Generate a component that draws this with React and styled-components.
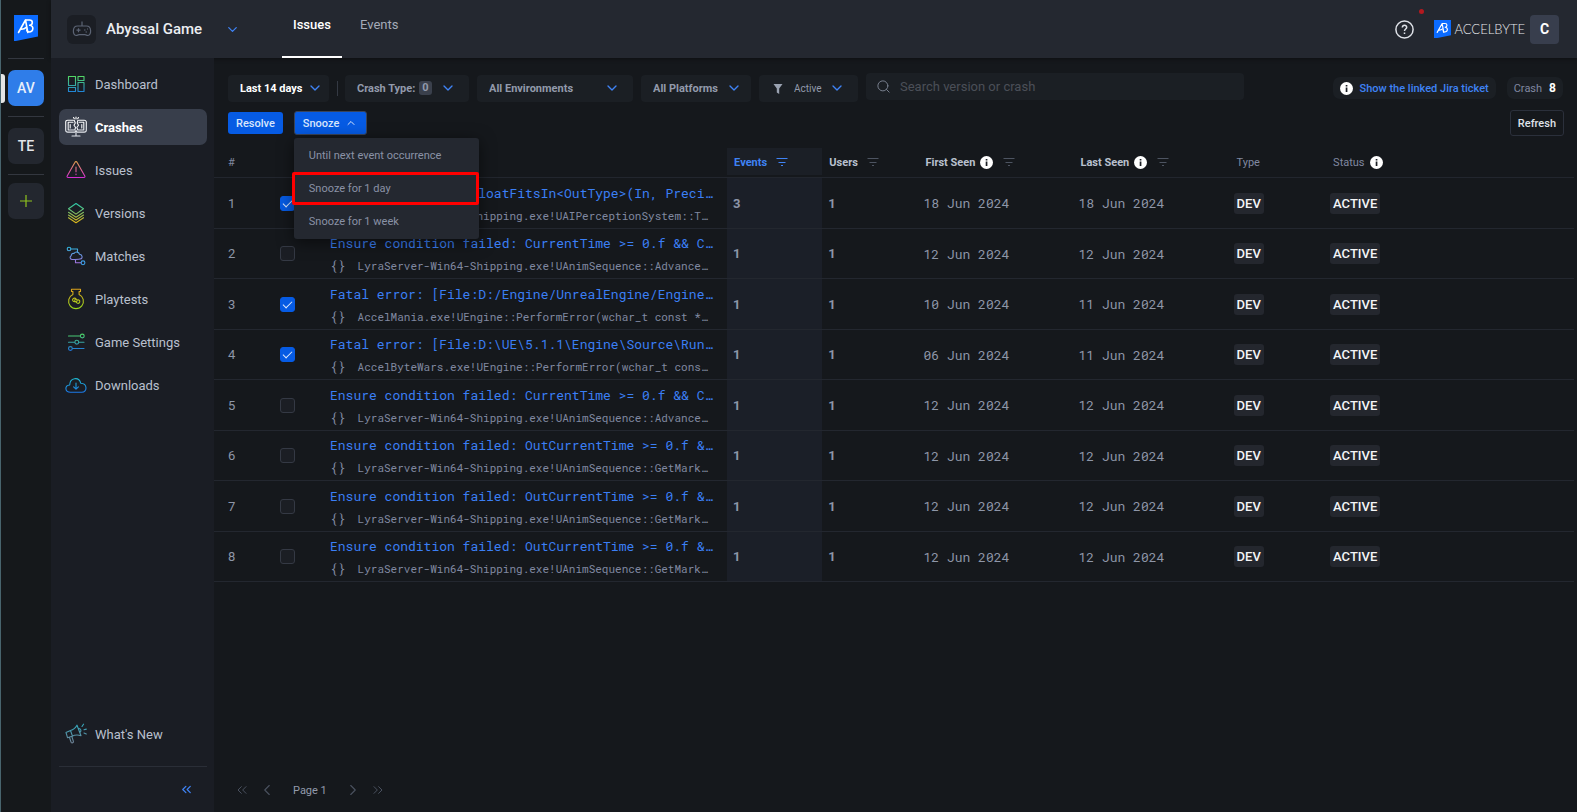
import React, { useState } from 'react'
import styled, { createGlobalStyle } from 'styled-components'
import { ChevronDown, ChevronUp, ChevronLeft, ChevronRight, ChevronsLeft, ChevronsRight, Search } from 'lucide-react'

const mono = `"Roboto Mono", "DejaVu Sans Mono", monospace`

const GlobalStyle = createGlobalStyle`
    * {
        box-sizing: border-box;
    }
    body {
        margin: 0;
        background: #15181c;
        color: #b4bccb;
        font-family: Roboto, "Liberation Sans", sans-serif;
        font-size: 12px;
    }
    button, input, select {
        font-family: inherit;
    }
    button {
        cursor: pointer;
    }
    svg {
        flex-shrink: 0;
    }
`

const Page = styled.div`
    display: flex;
    min-height: 100vh;
`

/* namespace rail */
const Rail = styled.nav`
    width: 51px;
    padding: 15px 7px 0;
    border-left: 1px solid #48646d;
    display: flex;
    flex-direction: column;
    align-items: stretch;
    background: #15181b;
`
const RailLogo = styled.a`
    display: flex;
    justify-content: center;
    height: 43px;
`
const RailItem = styled.div`
    border-top: 1px solid #33373f;
    padding: ${props => props.$last ? "8px" : "11px"} 0 ${props => props.$last ? "0" : "10px"};
    position: relative;
`
const RailButton = styled.button`
    display: flex;
    align-items: center;
    justify-content: center;
    width: 100%;
    height: 36px;
    padding: 0;
    border: none;
    border-radius: 7px;
    background: ${props => props.$active ? "#2f7de9" : "#23272f"};
    color: ${props => props.$active ? "#e8effa" : "#e3e5e9"};
    font-size: 14px;
    font-weight: 500;
`
const RailMarker = styled.span`
    position: absolute;
    left: -7px;
    top: 15px;
    width: 4px;
    height: 29px;
    border-radius: 0 3px 3px 0;
    background: #e4e4e4;
`

const Body = styled.div`
    flex: 1;
    min-width: 0;
    display: flex;
    flex-direction: column;
`

/* top bar */
const Header = styled.header`
    height: 58px;
    display: flex;
    align-items: center;
    padding: 0 18px 0 16px;
    background: #242830;
    box-shadow: 0 1px 4px rgba(0, 0, 0, 0.4);
`
const GameIcon = styled.span`
    display: flex;
    align-items: center;
    justify-content: center;
    width: 29px;
    height: 29px;
    border-radius: 6px;
    background: #1b1e24;
`
const GameButton = styled.button`
    display: flex;
    align-items: center;
    width: 215px;
    padding: 0;
    border: none;
    background: none;
    color: #eceef2;
    font-size: 15px;
    font-weight: 500;
    text-align: left;
`
const GameName = styled.span`
    width: 119px;
    margin-left: 10px;
`
const Tabs = styled.nav`
    display: flex;
    align-self: stretch;
`
const Tab = styled.a`
    padding: 16px 11px 0;
    line-height: 18px;
    border-bottom: 2px solid ${props => props.$active ? "#fff" : "transparent"};
    color: ${props => props.$active ? "#fff" : "#a4abb8"};
    font-size: 13px;
    font-weight: ${props => props.$active ? 500 : 400};
    text-decoration: none;
    & + & {
        margin-left: 7px;
    }
`
const HeaderRight = styled.div`
    margin-left: auto;
    display: flex;
    align-items: center;
`
const IconButton = styled.button`
    display: flex;
    align-items: center;
    padding: 0;
    border: none;
    background: none;
    color: ${props => props.$color || "#4a515f"};
`
const HelpWrap = styled.div`
    position: relative;
    margin-right: 20px;
`
const Dot = styled.span`
    position: absolute;
    top: -11px;
    right: -10px;
    width: 5px;
    height: 5px;
    border-radius: 50%;
    background: #b3191f;
`
const Brand = styled.a`
    display: flex;
    align-items: center;
    gap: 3px;
    color: #e6e8ec;
    font-family: Lato, sans-serif;
    font-size: 13px;
    font-weight: 300;
    text-decoration: none;
`
const Avatar = styled.button`
    width: 29px;
    height: 29px;
    margin-left: 5px;
    padding: 0;
    border: none;
    border-radius: 4px;
    background: #383e4d;
    color: #fff;
    font-size: 14px;
    font-weight: 700;
`

const Columns = styled.div`
    flex: 1;
    display: flex;
`

/* sidebar */
const Sidebar = styled.aside`
    width: 163px;
    padding: 0 7px 0 8px;
    background: #1a1d24;
    display: flex;
    flex-direction: column;
`
const Menu = styled.nav`
    display: flex;
    flex-direction: column;
    gap: 7px;
    padding-top: 8px;
`
const MenuItem = styled.a`
    display: flex;
    align-items: center;
    gap: 8px;
    height: 36px;
    padding-left: 6px;
    border-radius: 7px;
    background: ${props => props.$active ? "#383e4b" : "transparent"};
    color: ${props => props.$active ? "#fff" : "#b9c0ce"};
    font-size: 13px;
    font-weight: ${props => props.$active ? 700 : 400};
    text-decoration: none;
`
const SidebarFooter = styled.div`
    margin-top: auto;
`
const Collapse = styled.div`
    height: 46px;
    margin-top: 14px;
    padding-right: 13px;
    border-top: 1px solid #2a2e37;
    display: flex;
    align-items: center;
    justify-content: flex-end;
`

/* content */
const Main = styled.main`
    flex: 1;
    min-width: 0;
    display: flex;
    flex-direction: column;
    padding: 16px 3px 10px 0;
`
const FilterBar = styled.div`
    display: flex;
    align-items: center;
    gap: 8px;
    height: 28px;
    padding: 0 11px 0 14px;
`
const Filter = styled.label`
    display: grid;
    align-items: center;
    width: ${props => props.$width};
    height: 27px;
    padding: 0 6px 0 12px;
    border-radius: 4px;
    background: #1b1f24;
    color: #3f83f5;
    > * {
        grid-area: 1 / 1;
    }
    > svg {
        justify-self: end;
        pointer-events: none;
        margin-right: ${props => props.$inset || "0"};
    }
    > svg:first-child {
        justify-self: start;
        color: #9aa2b1;
    }
`
const FilterSelect = styled.select`
    appearance: none;
    border: none;
    background: none;
    height: 27px;
    padding: 0 0 0 ${props => props.$indent || "0"};
    color: ${props => props.$strong ? "#fff" : "#929aab"};
    font-size: ${props => props.$small ? "10px" : "11px"};
    font-weight: ${props => props.$small ? 400 : 700};
    outline: none;
`
const Divider = styled.span`
    width: 1px;
    height: 15px;
    margin-right: -1px;
    background: #343943;
`
const CrashType = styled.button`
    display: flex;
    align-items: center;
    width: 124px;
    height: 27px;
    padding: 0 13px 0 12px;
    border: none;
    border-radius: 4px;
    background: #1b1f24;
    color: #929aab;
    font-size: 11px;
    font-weight: 700;
    svg {
        margin-left: auto;
        color: #3f83f5;
    }
`
const Count = styled.span`
    margin-left: 4px;
    padding: 0 3px;
    line-height: 14px;
    border-radius: 3px;
    background: #3a404c;
`
const SearchBox = styled.label`
    display: flex;
    align-items: center;
    gap: 9px;
    width: 378px;
    height: 27px;
    margin-bottom: 4px;
    padding: 0 10px;
    border-radius: 4px;
    background: #1b1f24;
    color: #7d8493;
`
const SearchInput = styled.input`
    flex: 1;
    min-width: 0;
    padding: 0;
    border: none;
    outline: none;
    background: none;
    color: #d4d8e0;
    font-size: 13px;
    &::placeholder {
        color: #4b4f58;
    }
`
const Pills = styled.div`
    margin-left: auto;
    display: flex;
    gap: 11px;
`
const Pill = styled.div`
    display: flex;
    align-items: center;
    gap: 7px;
    height: 22px;
    padding: 0 7px;
    border-radius: 7px;
    background: #1b1f24;
    color: #8088a0;
`
const JiraButton = styled.button`
    padding: 0;
    border: none;
    background: none;
    color: #3f83f5;
    font-size: 11px;
    font-weight: 500;
`
const CrashLabel = styled.span`
    font-size: 11px;
`
const Strong = styled.b`
    color: #fff;
`

const ActionBar = styled.div`
    display: flex;
    align-items: center;
    gap: 11px;
    height: 26px;
    margin: 8px 10px 12px 14px;
`
const Button = styled.button`
    display: flex;
    align-items: center;
    gap: 6px;
    height: 22px;
    padding: 0 8px;
    border: none;
    border-radius: 3px;
    background: #065be4;
    color: #d9e6fc;
    font-size: 11px;
    font-weight: 500;
`
const SnoozeButton = styled(Button)`
    height: 24px;
    width: 73px;
    border: 1px solid #39445a;
`
const OutlineButton = styled(Button)`
    height: 26px;
    margin-left: auto;
    padding: 0 7px;
    border: 1px solid #2b303b;
    background: #15181c;
    color: #dfe2e8;
`
const Dropdown = styled.div`
    position: relative;
`
const DropdownMenu = styled.div`
    position: absolute;
    top: 27px;
    left: 0;
    z-index: 2;
    width: 185px;
    padding: 1px 0;
    border-radius: 3px;
    background: #242830;
    box-shadow: 0 3px 16px rgba(0, 0, 0, 0.55);
`
const DropdownItem = styled.button`
    display: block;
    width: calc(100% + 2px);
    height: 33px;
    margin-left: -2px;
    padding: 0 17px;
    border: none;
    border-radius: 2px;
    background: none;
    color: #8a92a6;
    font-size: 11px;
    text-align: left;
    outline: ${props => props.$marked ? "3px solid #f00" : "none"};
    outline-offset: -3px;
`

/* crash table */
const Table = styled.table`
    width: 100%;
    table-layout: fixed;
    border-spacing: 0;
`
const Col = styled.col`
    width: ${props => props.$width};
`
const Th = styled.th`
    height: 30px;
    padding: 0 0 1px ${props => props.$left || "7px"};
    border-bottom: 1px solid #22262e;
    color: ${props => props.$active ? "#3f83f5" : props.$plain ? "#8088a0" : "#b9c0ce"};
    background: ${props => props.$active ? "linear-gradient(#1b1f26, #1b1f26) 0 0 / 100% 27px no-repeat" : "none"};
    font-size: 11px;
    font-weight: ${props => props.$plain ? 400 : 700};
    text-align: left;
`
const HeadCell = styled.div`
    display: flex;
    align-items: center;
    gap: ${props => props.$tight ? "5px" : "9px"};
`
const Tr = styled.tr`
    height: 51px;
    &:nth-child(even) {
        height: 50px;
    }
`
const Td = styled.td`
    padding: 0 0 0 ${props => props.$left || "6px"};
    border-bottom: 1px solid #23272f;
    background: ${props => props.$active ? "#1b1f28" : "none"};
    color: #8e96a8;
    font-family: ${props => props.$mono ? mono : "inherit"};
    font-size: 13px;
    font-weight: ${props => props.$bold ? 700 : 400};
`
const SummaryTd = styled(Td)`
    padding: 2px 0 0;
`
const Checkbox = styled.input`
    appearance: none;
    display: grid;
    place-items: center;
    width: 15px;
    height: 15px;
    margin: 0;
    border: 1px solid #343944;
    border-radius: 3px;
    background: #1b1e24;
    &:checked {
        border-color: #065be4;
        background: #065be4;
    }
    &:checked::after {
        content: "";
        width: 8px;
        height: 4px;
        margin-bottom: 2px;
        border: solid #dce8fd;
        border-width: 0 0 1px 1px;
        transform: rotate(-45deg);
    }
`
const CrashLink = styled.a`
    display: block;
    line-height: 20px;
    overflow: hidden;
    white-space: nowrap;
    color: #3b7ff5;
    font-family: ${mono};
    font-size: 13px;
    text-decoration: none;
`
const Frame = styled.div`
    display: flex;
    align-items: center;
    gap: 12px;
    margin-top: 3px;
    line-height: 20px;
    overflow: hidden;
    white-space: nowrap;
    color: #8088a0;
    font-family: ${mono};
    font-size: 11px;
`
const Braces = styled.span`
    font-size: 13px;
    line-height: 20px;
`
const Badge = styled.span`
    display: inline-block;
    padding: 0 3px;
    line-height: 21px;
    border-radius: 3px;
    background: #24272e;
    color: #f4f5f7;
    font-size: 13px;
    font-weight: 500;
`

const Pagination = styled.nav`
    display: flex;
    align-items: center;
    height: 24px;
    margin-top: auto;
    padding-left: 20px;
    gap: 8px;
`
const PageLabel = styled.span`
    margin: 0 9px;
    color: #929aab;
    font-size: 11px;
`

const Gradient = ({ id, from, to }) => (
    <defs>
        <linearGradient id={id} x1="0" y1="0" x2="0" y2="22" gradientUnits="userSpaceOnUse">
            <stop offset="0.1" stopColor={from} />
            <stop offset="0.9" stopColor={to} />
        </linearGradient>
    </defs>
)

const MenuIcon = ({ id, from, to, children }) => (
    <svg width="22" height="22" viewBox="0 0 22 22" fill="none" stroke={`url(#${id})`} strokeWidth="1.1" strokeLinejoin="round" strokeLinecap="round" aria-hidden="true">
        <Gradient id={id} from={from} to={to} />
        {children}
    </svg>
)

const icons = {
    dashboard: <MenuIcon id="dash" from="#57e05c" to="#1d7fe0">
        <path d="M3.500 3.500h7v9h-7zM13 3.500h6v4h-6zM3.500 14.500h7v4h-7zM13 9.500h6v9h-6z" />
    </MenuIcon>,
    crashes: <MenuIcon id="crash" from="#ffffff" to="#dfe3ea">
        <path d="M8.500 4.300H2.800c-1.200 0-2.100.8-2.100 1.800v8.200c0 1 .9 1.800 2.100 1.800h7.200l1-1.600 1 1.600h7.200c1.200 0 2.100-.8 2.100-1.800V6.100c0-1-.9-1.800-2.100-1.800H13.500" />
        <path d="M8 6.300H3.200v7.700H9M14 6.300h4.800v7.700H13M5.200 8.500v3.500M16.800 8.500v3.500M9.300 4.500l1 2.500-1.300 2.300 1.600 2.200-.8 2.500M12.700 4.500l-.4 2.500 1.200 2.300-1.600 2.200.9 2.500M8.500 1.500l.8 1.300M11 1v2M13.500 1.500l-.8 1.300M11 16.500v3.300M7 20h8" />
    </MenuIcon>,
    issues: <MenuIcon id="issue" from="#e8a54b" to="#d524e0">
        <path d="M11 2.600c.5 0 .8.300 1 .7l7.800 13.600c.4.800 0 1.600-.9 1.600H3.100c-.9 0-1.300-.8-.9-1.600L10 3.300c.2-.4.500-.7 1-.7zM11 8v4.800M11 15v.6" />
    </MenuIcon>,
    versions: <MenuIcon id="ver" from="#2ec8a8" to="#d8b51c">
        <path d="M11 1.500l7.500 5.300L11 12.100 3.500 6.800zM3.500 10.300l7.500 5 7.500-5M3.500 13l7.500 5 7.500-5M3.500 15.700l7.500 5 7.500-5" />
    </MenuIcon>,
    matches: <MenuIcon id="match" from="#2fb6e0" to="#b06be0">
        <circle cx="4" cy="4" r="1.800" />
        <path d="M6 4h6.500v2.800M7 14.500c-2-.2-2.600-2.800-.8-3.800 0-2 1.500-2.600 2.800-2.200 1.300-2.200 5-1.800 5.500.8 2.600.2 3.300 3 1.700 4.500-2.200 1-6.200.8-9.200.7zM10.500 14.800v3h5.700" />
        <circle cx="18" cy="17.800" r="1.900" stroke="#3f9fe8" />
    </MenuIcon>,
    playtests: <MenuIcon id="play" from="#dda31a" to="#9bd61e">
        <path d="M6.500 1.300h9v2.200h-1.400v3a7.400 7.400 0 1 1-6.200 0v-3H6.500z" />
        <path d="M7.600 11.500c.8-1.800 2.600-1.700 3.600-.5l1 1.100c1.600-.6 3 .3 2.500 1.900-.6 1.800-2.300 1.700-3.300.5l-1-1.100c-1.600.6-3.200-.3-2.800-1.900zM11.200 11l-1.800 1.200M12.200 12.100l-.8 2.400" />
    </MenuIcon>,
    settings: <MenuIcon id="set" from="#4fd860" to="#1f76e0">
        <path d="M3.500 5h12M3.500 11.200h6M14 11.200h5M7.500 17.500H19" />
        <circle cx="17.300" cy="5" r="1.900" />
        <circle cx="11.800" cy="11.200" r="1.900" />
        <circle cx="5.400" cy="17.500" r="1.900" />
    </MenuIcon>,
    downloads: <MenuIcon id="down" from="#1fc4cf" to="#1b72ea">
        <path d="M5.500 18.200C-.4 18.200-.6 11.600 4.700 11 4.900 3.400 14 2.500 15.700 9.200c6.800.2 7 9 1 9zM11 9v6M8.600 12.800L11 15.200l2.400-2.400" />
    </MenuIcon>,
    news: <MenuIcon id="news" from="#35a8bd" to="#6f8296">
        <path d="M1 9.500l4.500-2c3-.8 5-2.600 6.500-5.300l4 10.500c-3-1-6-1-9 .5l-4.500 1.500zM5.500 7.500l2 5.700M4.500 14.500l1.600 4.700c.8 1.200 2.500.5 2.300-.8L7 14M13.500 5.500c2.200-.4 3.300 2.800 1.300 4M17 3.500l1.500-2.300M19 6.800l2.300-.7M19 10l2.300 1" />
    </MenuIcon>,
}

const Logo = ({ size }) => (
    <svg width={size} height={size * 1.1} viewBox="0 0 24 26.400" fill="none" stroke="#fff" strokeWidth="1.600" strokeLinejoin="round" strokeLinecap="round" aria-hidden="true">
        <path d="M0 0h24v21.500L0 26.400z" fill="#0b6bff" stroke="none" />
        <path d="M4.500 17.500L11.500 5l2.300 12.500M6.500 14.200c2.500.3 4.500-.6 6-2" />
        <path d="M12 5h3.500c3.800 0 3.600 4.800.2 5.300 4.600.4 4 6.700-.7 6.700-1.300 0-2-.8-2.200-2" />
    </svg>
)

const InfoIcon = () => (
    <svg width="13" height="13" viewBox="0 0 13 13" aria-hidden="true">
        <circle cx="6.500" cy="6.500" r="6.500" fill="#fff" />
        <path d="M5.700 5.400h1.700V10H5.700zM5.700 3h1.700v1.500H5.700z" fill="#1b1e24" />
    </svg>
)

const SortIcon = () => (
    <svg width="12" height="10" viewBox="0 0 12 10" stroke="currentColor" strokeWidth="1" aria-hidden="true">
        <path d="M0.500 1.500h11M2.500 5.500h7M5 8.500h2" />
    </svg>
)

const MutedSort = styled.span`
    display: flex;
    color: #4d5461;
    margin-left: ${props => props.$wide ? "5px" : "0"};
`

const menu = [
    ["dashboard", "Dashboard"],
    ["crashes", "Crashes"],
    ["issues", "Issues"],
    ["versions", "Versions"],
    ["matches", "Matches"],
    ["playtests", "Playtests"],
    ["settings", "Game Settings"],
    ["downloads", "Downloads"],
]

const lyra = "LyraServer-Win64-Shipping.exe!UAnimSequence::"

const crashes = [
    { title: "Assertion failed: FloatFitsIn<OutType>(In, Preci…", frame: "LyraServer-Win64-Shipping.exe!UAIPerceptionSystem::T…", events: 3, first: "18 Jun 2024", last: "18 Jun 2024" },
    { title: "Ensure condition failed: CurrentTime >= 0.f && C…", frame: lyra + "Advance…", events: 1, first: "12 Jun 2024", last: "12 Jun 2024" },
    { title: "Fatal error: [File:D:/Engine/UnrealEngine/Engine…", frame: "AccelMania.exe!UEngine::PerformError(wchar_t const *…", events: 1, first: "10 Jun 2024", last: "11 Jun 2024" },
    { title: "Fatal error: [File:D:\\UE\\5.1.1\\Engine\\Source\\Run…", frame: "AccelByteWars.exe!UEngine::PerformError(wchar_t cons…", events: 1, first: "06 Jun 2024", last: "11 Jun 2024" },
    { title: "Ensure condition failed: CurrentTime >= 0.f && C…", frame: lyra + "Advance…", events: 1, first: "12 Jun 2024", last: "12 Jun 2024" },
    { title: "Ensure condition failed: OutCurrentTime >= 0.f &…", frame: lyra + "GetMark…", events: 1, first: "12 Jun 2024", last: "12 Jun 2024" },
    { title: "Ensure condition failed: OutCurrentTime >= 0.f &…", frame: lyra + "GetMark…", events: 1, first: "12 Jun 2024", last: "12 Jun 2024" },
    { title: "Ensure condition failed: OutCurrentTime >= 0.f &…", frame: lyra + "GetMark…", events: 1, first: "12 Jun 2024", last: "12 Jun 2024" },
]

const snoozeOptions = ["Until next event occurrence", "Snooze for 1 day", "Snooze for 1 week"]

const Filters = () => (
    <FilterBar>
        <Filter $width="101px">
            <FilterSelect $strong aria-label="Period"><option>Last 14 days</option></FilterSelect>
            <ChevronDown size={16} />
        </Filter>
        <Divider />
        <CrashType type="button">Crash Type:<Count>0</Count><ChevronDown size={16} /></CrashType>
        <Filter $width="156px" $inset="7px">
            <FilterSelect aria-label="Environment"><option>All Environments</option></FilterSelect>
            <ChevronDown size={16} />
        </Filter>
        <Filter $width="110px" $inset="3px">
            <FilterSelect aria-label="Platform"><option>All Platforms</option></FilterSelect>
            <ChevronDown size={16} />
        </Filter>
        <Filter $width="99px" $inset="7px">
            <svg width="14" height="11" viewBox="0 0 14 11" fill="currentColor" aria-hidden="true">
                <path d="M2.500 1h9L8.200 5.500V11L5.800 9.500V5.500z" />
            </svg>
            <FilterSelect $small $indent="23px" aria-label="Status"><option>Active</option></FilterSelect>
            <ChevronDown size={16} />
        </Filter>
        <SearchBox>
            <Search size={15} strokeWidth={1.5} />
            <SearchInput type="text" placeholder="Search version or crash" aria-label="Search version or crash" />
        </SearchBox>
        <Pills>
            <Pill><InfoIcon /><JiraButton type="button">Show the linked Jira ticket</JiraButton></Pill>
            <Pill><CrashLabel>Crash</CrashLabel> <Strong>8</Strong></Pill>
        </Pills>
    </FilterBar>
)

const CrashTable = () => {
    const [selected, setSelected] = useState([0, 2, 3])

    const toggle = (index) => {
        setSelected(selected.includes(index) ? selected.filter(i => i !== index) : [...selected, index])
    }

    return (
        <Table>
            <colgroup>
                <Col $width="66px" />
                <Col $width="50px" />
                <Col $width="29.2%" />
                <Col $width="7%" />
                <Col $width="7%" />
                <Col $width="11.4%" />
                <Col $width="11.4%" />
                <Col $width="7.1%" />
                <Col />
            </colgroup>
            <thead>
                <tr>
                    <Th $plain $left="14px">#</Th>
                    <Th aria-label="Selected" />
                    <Th aria-label="Crash" />
                    <Th $active><HeadCell>Events <SortIcon /></HeadCell></Th>
                    <Th><HeadCell>Users <MutedSort><SortIcon /></MutedSort></HeadCell></Th>
                    <Th $left="8px"><HeadCell $tight>First Seen <InfoIcon /><MutedSort $wide><SortIcon /></MutedSort></HeadCell></Th>
                    <Th $left="8px"><HeadCell $tight>Last Seen <InfoIcon /><MutedSort $wide><SortIcon /></MutedSort></HeadCell></Th>
                    <Th $plain $left="9px">Type</Th>
                    <Th $plain $left="9px"><HeadCell $tight>Status <InfoIcon /></HeadCell></Th>
                </tr>
            </thead>
            <tbody>
                {crashes.map((crash, index) => (
                    <Tr key={index}>
                        <Td $left="14px">{index + 1}</Td>
                        <Td $left="0">
                            <Checkbox type="checkbox" aria-label={`Select crash ${index + 1}`} checked={selected.includes(index)} onChange={() => toggle(index)} />
                        </Td>
                        <SummaryTd>
                            <CrashLink href="#">{crash.title}</CrashLink>
                            <Frame><Braces>{"{}"}</Braces>{crash.frame}</Frame>
                        </SummaryTd>
                        <Td $active $bold>{crash.events}</Td>
                        <Td $bold>1</Td>
                        <Td $mono>{crash.first}</Td>
                        <Td $mono>{crash.last}</Td>
                        <Td><Badge>DEV</Badge></Td>
                        <Td><Badge>ACTIVE</Badge></Td>
                    </Tr>
                ))}
            </tbody>
        </Table>
    )
}

const App = () => {
    const [open, setOpen] = useState(true)

    return (
        <Page>
            <GlobalStyle />
            <Rail>
                <RailLogo href="#" aria-label="Home"><Logo size={24} /></RailLogo>
                <RailItem>
                    <RailMarker />
                    <RailButton type="button" $active>AV</RailButton>
                </RailItem>
                <RailItem>
                    <RailButton type="button">TE</RailButton>
                </RailItem>
                <RailItem $last>
                    <RailButton type="button" aria-label="Add">
                        <svg width="12" height="12" viewBox="0 0 12 12" stroke="#8fc31f" strokeWidth="1.200"><path d="M6 0v12M0 6h12" /></svg>
                    </RailButton>
                </RailItem>
            </Rail>
            <Body>
                <Header>
                    <GameButton type="button">
                        <GameIcon>
                            <svg width="20" height="20" viewBox="0 0 20 20" fill="none" stroke="#5c6474" strokeWidth="1.200" aria-hidden="true">
                                <path d="M10 2.500V7M5.500 7h9c5.500 0 5 9.500 1.500 9.500-1.200 0-2-.8-3-.8H7c-1 0-1.800.8-3 .8C.5 16.500 0 7 5.500 7zM4.500 11.200h4M6.500 9.200v4" />
                                <path d="M12 11h1.500M13.500 13H15M15 10h1" />
                            </svg>
                        </GameIcon>
                        <GameName>Abyssal Game</GameName>
                        <ChevronDown size={15} color="#3f83f5" />
                    </GameButton>
                    <Tabs>
                        <Tab href="#" $active>Issues</Tab>
                        <Tab href="#">Events</Tab>
                    </Tabs>
                    <HeaderRight>
                        <HelpWrap>
                            <IconButton type="button" aria-label="Help" $color="#dfe2e8">
                                <svg width="19" height="19" viewBox="0 0 19 19" fill="none" stroke="currentColor" strokeWidth="1.500">
                                    <circle cx="9.500" cy="9.500" r="8.600" />
                                    <path d="M7.300 7.500c.2-3 4.500-2.800 4.400-.2 0 1.700-2.200 1.700-2.200 3.700M9.500 12.600v1.500" />
                                </svg>
                            </IconButton>
                            <Dot />
                        </HelpWrap>
                        <Brand href="#"><Logo size={17} />ACCELBYTE</Brand>
                        <Avatar type="button">C</Avatar>
                    </HeaderRight>
                </Header>
                <Columns>
                    <Sidebar>
                        <Menu>
                            {menu.map(([icon, label]) => (
                                <MenuItem href="#" key={icon} $active={icon === "crashes"}>{icons[icon]}{label}</MenuItem>
                            ))}
                        </Menu>
                        <SidebarFooter>
                            <MenuItem href="#">{icons.news}What's New</MenuItem>
                            <Collapse>
                                <IconButton type="button" aria-label="Collapse menu" $color="#3f83f5"><ChevronsLeft size={15} /></IconButton>
                            </Collapse>
                        </SidebarFooter>
                    </Sidebar>
                    <Main>
                        <Filters />
                        <ActionBar>
                            <Button type="button">Resolve</Button>
                            <Dropdown>
                                <SnoozeButton type="button" aria-expanded={open} onClick={() => setOpen(!open)}>Snooze <ChevronUp size={12} /></SnoozeButton>
                                {open && (
                                    <DropdownMenu>
                                        {snoozeOptions.map((option, index) => (
                                            <DropdownItem type="button" key={option} $marked={index === 1}>{option}</DropdownItem>
                                        ))}
                                    </DropdownMenu>
                                )}
                            </Dropdown>
                            <OutlineButton type="button">Refresh</OutlineButton>
                        </ActionBar>
                        <CrashTable />
                        <Pagination aria-label="Pages">
                            <IconButton type="button" aria-label="First page"><ChevronsLeft size={16} strokeWidth={1.5} /></IconButton>
                            <IconButton type="button" aria-label="Previous page"><ChevronLeft size={18} strokeWidth={1.5} /></IconButton>
                            <PageLabel>Page 1</PageLabel>
                            <IconButton type="button" aria-label="Next page"><ChevronRight size={18} strokeWidth={1.5} /></IconButton>
                            <IconButton type="button" aria-label="Last page"><ChevronsRight size={16} strokeWidth={1.5} /></IconButton>
                        </Pagination>
                    </Main>
                </Columns>
            </Body>
        </Page>
    )
}

export default App
